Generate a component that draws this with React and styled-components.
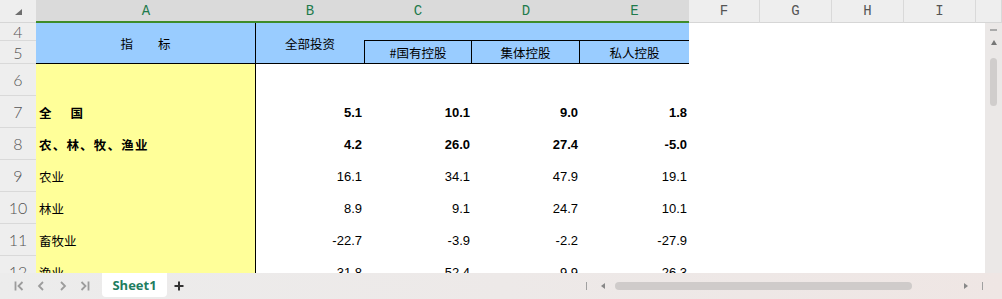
import React from "react";
import styled, { createGlobalStyle } from "styled-components";

const columns = [
  { label: "A", width: 220, selected: true },
  { label: "B", width: 108, selected: true },
  { label: "C", width: 108, selected: true },
  { label: "D", width: 108, selected: true },
  { label: "E", width: 109, selected: true },
  { label: "F", width: 71 },
  { label: "G", width: 72 },
  { label: "H", width: 72 },
  { label: "I", width: 72 },
  { label: "" },
];

const rows = [
  { no: 6, label: "", values: [] },
  { no: 7, label: "全　 国", bold: true, values: ["5.1", "10.1", "9.0", "1.8"] },
  { no: 8, label: "农、林、牧、渔业", bold: true, values: ["4.2", "26.0", "27.4", "-5.0"] },
  { no: 9, label: "农业", values: ["16.1", "34.1", "47.9", "19.1"] },
  { no: 10, label: "林业", values: ["8.9", "9.1", "24.7", "10.1"] },
  { no: 11, label: "畜牧业", values: ["-22.7", "-3.9", "-2.2", "-27.9"] },
  { no: 12, label: "渔业", values: ["31.8", "52.4", "9.9", "26.3"] },
];

const App = () => {
  return (
    <Window>
      <GlobalStyle />
      <ColumnBar>
        <Corner>
          <CornerMark />
        </Corner>
        {columns.map((c, i) => (
          <ColHead key={i} $w={c.width} $selected={c.selected}>
            {c.label}
          </ColHead>
        ))}
      </ColumnBar>
      <Body>
        <Sheet>
          <RowNum>4</RowNum>
          <HeadCell $span={2} $right>指　　标</HeadCell>
          <HeadCell $span={2}>全部投资</HeadCell>
          <HeadCell $cols={3} />
          <Filler />
          <RowNum>5</RowNum>
          <HeadCell $left $right>#国有控股</HeadCell>
          <HeadCell $right>集体控股</HeadCell>
          <HeadCell>私人控股</HeadCell>
          <Filler />
          {rows.map((r) => (
            <React.Fragment key={r.no}>
              <RowNum>{r.no}</RowNum>
              <LabelCell $bold={r.bold}>{r.label}</LabelCell>
              {[0, 1, 2, 3].map((k) => (
                <NumCell key={k} $bold={r.bold}>
                  {r.values[k] || ""}
                </NumCell>
              ))}
              <Filler />
            </React.Fragment>
          ))}
        </Sheet>
        <VScroll>
          <VDash />
          <UpArrow />
          <VThumb />
        </VScroll>
      </Body>
      <TabBar>
        <NavGroup>
          <NavIcon viewBox="0 0 10 10">
            <path d="M1.5 0.5v9M8.5 1L4.5 5l4 4" />
          </NavIcon>
          <NavIcon viewBox="0 0 10 10">
            <path d="M7 1L3 5l4 4" />
          </NavIcon>
          <NavIcon viewBox="0 0 10 10">
            <path d="M3 1l4 4-4 4" />
          </NavIcon>
          <NavIcon viewBox="0 0 10 10">
            <path d="M1.5 1l4 4-4 4M8.5 0.5v9" />
          </NavIcon>
        </NavGroup>
        <SheetTab>Sheet1</SheetTab>
        <AddIcon viewBox="0 0 10 10">
          <path d="M5 0.5v9M0.5 5h9" />
        </AddIcon>
        <HScroll>
          <Tick />
          <LeftArrow />
          <HThumb />
          <RightArrow />
          <Tick />
        </HScroll>
      </TabBar>
    </Window>
  );
};

const GlobalStyle = createGlobalStyle`
  body {
    margin: 0;
    overflow: hidden;
    background: #fff;
  }
  * {
    box-sizing: border-box;
  }
`;

const Window = styled.div`
  width: 1002px;
  height: 299px;
  display: flex;
  flex-direction: column;
  overflow: hidden;
  font-family: "Liberation Sans", "Noto Sans CJK SC", sans-serif;
`;

const ColumnBar = styled.div`
  display: flex;
  height: 23px;
  flex: 0 0 23px;
`;

const Corner = styled.div`
  width: 36px;
  flex: 0 0 36px;
  background: #eeeeee;
  border-bottom: 1px solid #d6d6d6;
  padding: 9px 0 0 15px;
`;

const CornerMark = styled.div`
  width: 0;
  height: 0;
  border-left: 7px solid transparent;
  border-bottom: 6px solid #6e6e6e;
`;

const ColHead = styled.div`
  flex: ${(p) => (p.$w ? `0 0 ${p.$w}px` : "1")};
  display: flex;
  align-items: center;
  justify-content: center;
  font-family: "Liberation Mono", monospace;
  font-size: 14px;
  color: ${(p) => (p.$selected ? "#1e7a4c" : "#555")};
  background: ${(p) => (p.$selected ? "#dadada" : "#eeeeee")};
  border-bottom: ${(p) => (p.$selected ? "2px solid #3f8c2a" : "1px solid #d6d6d6")};
  border-right: ${(p) => (p.$selected ? "none" : "1px solid #d9d9d9")};
`;

const Body = styled.div`
  flex: 1;
  display: flex;
  min-height: 0;
`;

const Sheet = styled.div`
  flex: 1;
  display: grid;
  grid-template-columns: 36px 220px 108px 108px 108px 109px 1fr;
  grid-template-rows: 18px 23px repeat(7, 32px);
  overflow: hidden;
  background: #fff;
`;

const RowNum = styled.div`
  display: flex;
  align-items: center;
  justify-content: center;
  background: #eeeeee;
  border-bottom: 1px solid #d9d9d9;
  font-family: "Lato", "Liberation Sans", sans-serif;
  font-weight: 300;
  font-size: 16px;
  color: #555;
`;

const HeadCell = styled.div`
  grid-row: ${(p) => (p.$span ? `span ${p.$span}` : "auto")};
  grid-column: ${(p) => (p.$cols ? `span ${p.$cols}` : "auto")};
  display: flex;
  align-items: center;
  justify-content: center;
  background: #99ccff;
  border-bottom: 1px solid #000;
  border-right: ${(p) => (p.$right ? "1px solid #000" : "none")};
  border-left: ${(p) => (p.$left ? "1px solid #000" : "none")};
  font-family: "Noto Sans CJK SC", sans-serif;
  font-size: 12.5px;
  color: #000;
  padding-top: 1px;
`;

const Filler = styled.div`
  background: #fff;
`;

const LabelCell = styled.div`
  display: flex;
  align-items: center;
  padding-left: 3px;
  background: #ffff99;
  border-right: 1px solid #000;
  font-family: "Noto Sans CJK SC", sans-serif;
  font-size: 12.5px;
  font-weight: ${(p) => (p.$bold ? 700 : 400)};
  letter-spacing: ${(p) => (p.$bold ? "1.2px" : "0")};
  color: #000;
  white-space: pre;
`;

const NumCell = styled.div`
  display: flex;
  align-items: center;
  justify-content: flex-end;
  padding-right: 2px;
  font-size: 13px;
  font-weight: ${(p) => (p.$bold ? 700 : 400)};
  color: #000;
`;

const VScroll = styled.div`
  width: 17px;
  flex: 0 0 17px;
  background: #ebe8e7;
  display: flex;
  flex-direction: column;
  align-items: center;
  padding-top: 6px;
`;

const VDash = styled.div`
  width: 7px;
  height: 2px;
  background: #aaa;
`;

const UpArrow = styled.div`
  margin-top: 9px;
  width: 0;
  height: 0;
  border-left: 3.5px solid transparent;
  border-right: 3.5px solid transparent;
  border-bottom: 5px solid #777;
`;

const VThumb = styled.div`
  margin-top: 13px;
  width: 7px;
  height: 48px;
  border-radius: 4px;
  background: #d0cdcc;
`;

const TabBar = styled.div`
  flex: 0 0 26px;
  height: 26px;
  display: flex;
  align-items: stretch;
  background: linear-gradient(90deg, #ececec 0%, #ede9e8 50%, #efe6e4 100%);
`;

const NavGroup = styled.div`
  display: flex;
  align-items: center;
  gap: 12px;
  padding-left: 14px;
  width: 102px;
`;

const NavIcon = styled.svg`
  width: 10px;
  height: 10px;
  fill: none;
  stroke: #9c9c9c;
  stroke-width: 1.8;
`;

const SheetTab = styled.div`
  width: 65px;
  margin-bottom: 2px;
  display: flex;
  align-items: center;
  justify-content: center;
  background: #fff;
  border-radius: 0 0 4px 4px;
  font-family: "Open Sans", "Liberation Sans", sans-serif;
  font-weight: 700;
  font-size: 13px;
  color: #1f7d5f;
`;

const AddIcon = styled.svg`
  align-self: center;
  margin-left: 7px;
  width: 10px;
  height: 10px;
  fill: none;
  stroke: #333;
  stroke-width: 2;
`;

const HScroll = styled.div`
  margin-left: auto;
  width: 420px;
  display: flex;
  align-items: center;
  padding: 0 19px 0 4px;
`;

const Tick = styled.div`
  width: 1px;
  height: 8px;
  background: #a0a0a0;
`;

const LeftArrow = styled.div`
  margin: 0 10px 0 14px;
  width: 0;
  height: 0;
  border-top: 3px solid transparent;
  border-bottom: 3px solid transparent;
  border-right: 4px solid #888;
`;

const RightArrow = styled.div`
  margin: 0 14px 0 auto;
  width: 0;
  height: 0;
  border-top: 3px solid transparent;
  border-bottom: 3px solid transparent;
  border-left: 4px solid #888;
`;

const HThumb = styled.div`
  width: 297px;
  height: 8px;
  border-radius: 4px;
  background: #cfcbca;
`;

export default App;
